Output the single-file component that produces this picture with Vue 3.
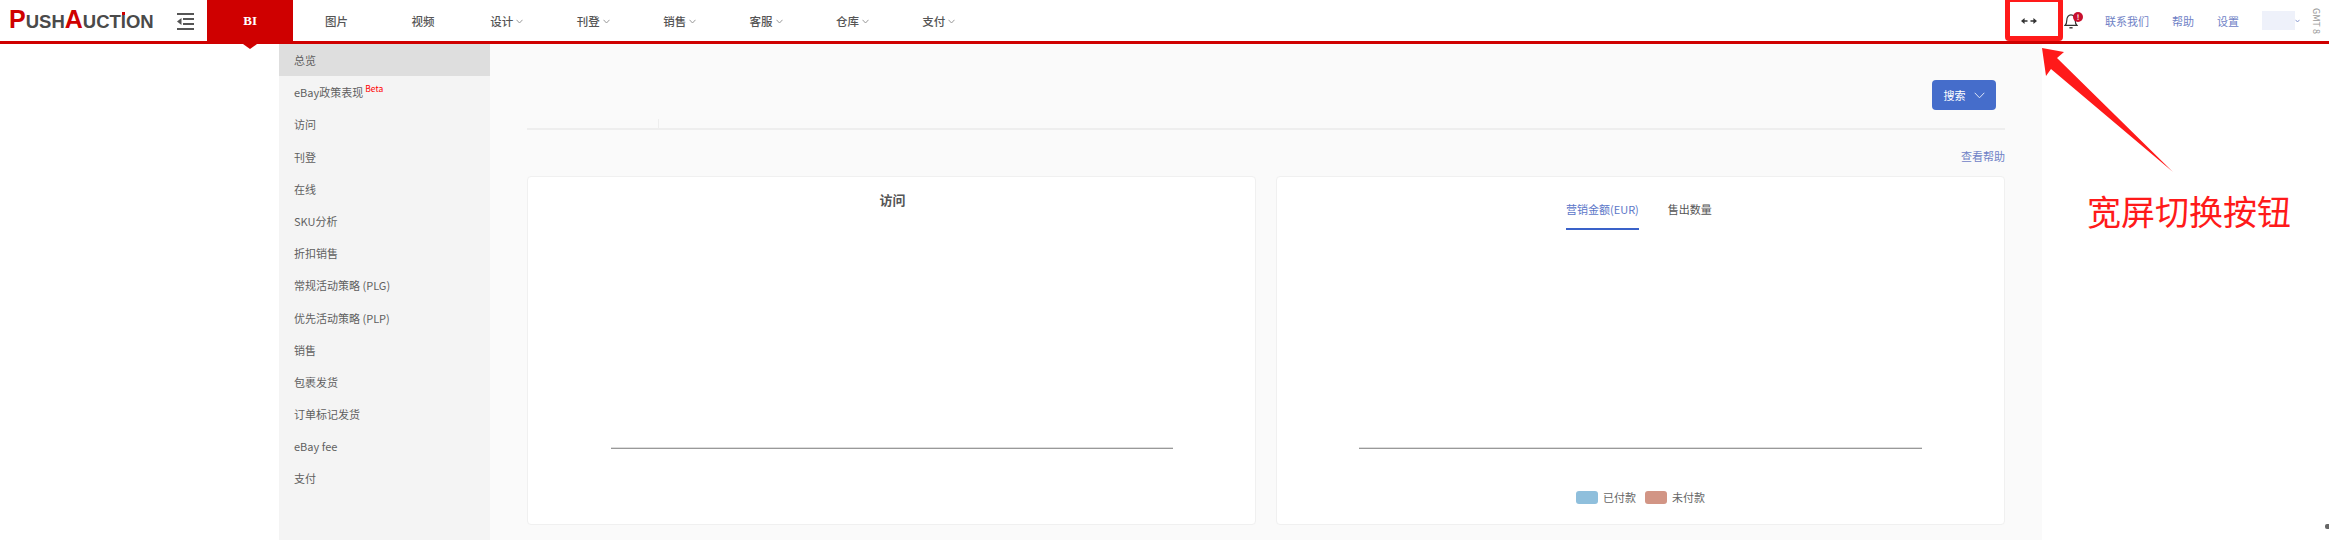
<template>
  <div class="page">
    <!-- 顶部导航 -->
    <header class="top-bar">
      <div class="logo">
        <span class="big">P</span><span>USH</span><span class="big">A</span><span>UCT</span><span class="dot-i">I</span><span>ON</span>
      </div>
      <svg class="menu-toggle" width="17" height="17" viewBox="0 0 17 17">
        <path d="M0 1h17M6 6h11M6 11h11M0 16h17" stroke="#555" stroke-width="2" fill="none" />
        <path d="M0 8.5L4.5 5v7z" fill="#555" />
      </svg>
      <nav class="nav">
        <a
          v-for="item in navItems"
          :key="item.label"
          :class="['nav-item', { 'nav-active': item.active }]"
        >
          <span>{{ item.label }}</span>
          <svg v-if="item.arrow" class="nav-chevron" width="7" height="5" viewBox="0 0 7 5">
            <path d="M0.5 0.8L3.5 4L6.5 0.8" stroke="#999" fill="none" />
          </svg>
        </a>
      </nav>
      <div class="top-right">
        <svg class="wide-icon" width="16" height="8" viewBox="0 0 16 8">
          <path d="M3 4h3.5M9.5 4h3.5" stroke="#333" stroke-width="1.4" />
          <path d="M0 4l3.6-3v6zM16 4l-3.6-3v6z" fill="#333" />
        </svg>
        <div class="bell">
          <svg width="14" height="16" viewBox="0 0 14 16">
            <path d="M1 12.4c1.4-1.3 1.8-3 1.8-5.2C2.8 4 4.6 1.8 7 1.8s4.2 2.2 4.2 5.4c0 2.2.4 3.9 1.8 5.2z" stroke="#333" stroke-width="1.2" fill="none" />
            <path d="M5.4 14.8h3.2" stroke="#333" stroke-width="1.4" />
          </svg>
          <span class="badge">!</span>
        </div>
        <a class="top-link">联系我们</a>
        <a class="top-link">帮助</a>
        <a class="top-link">设置</a>
        <div class="user-blur"></div>
        <svg class="user-chevron" width="5" height="4" viewBox="0 0 5 4">
          <path d="M0.5 0.8L2.5 3L4.5 0.8" stroke="#8a9ad0" fill="none" />
        </svg>
        <span class="gmt">GMT 8</span>
      </div>
    </header>
    <div class="active-caret"></div>

    <div class="body-row">
      <!-- 侧边菜单 -->
      <aside class="side-menu">
        <div
          v-for="(item, index) in sideItems"
          :key="item"
          :class="['side-item', { 'side-active': index === 0 }]"
        >
          {{ item }}<sup v-if="item === 'eBay政策表现'" class="beta">Beta</sup>
        </div>
      </aside>

      <!-- 主内容 -->
      <main class="content">
        <div class="filter-bar">
          <span class="filter-tick"></span>
          <button class="search-btn">
            搜索
            <svg width="11" height="7" viewBox="0 0 11 7">
              <path d="M0.7 0.8L5.5 5.8L10.3 0.8" stroke="#dfe6f7" fill="none" />
            </svg>
          </button>
        </div>
        <div class="help-row"><a class="help-link">查看帮助</a></div>
        <div class="cards">
          <section class="card">
            <h3 class="card-title">访问</h3>
            <div class="axis axis-left"></div>
          </section>
          <section class="card">
            <div class="tabs">
              <span class="tab tab-active">营销金额(EUR)</span>
              <span class="tab">售出数量</span>
            </div>
            <div class="axis axis-right"></div>
            <div class="legend">
              <i class="swatch swatch-paid"></i><span>已付款</span>
              <i class="swatch swatch-unpaid"></i><span>未付款</span>
            </div>
          </section>
        </div>
      </main>
    </div>

    <!-- 标注 -->
    <div class="mark-box"></div>
    <svg class="mark-arrow" width="150" height="140" viewBox="0 0 150 140">
      <path d="M5 3L27 7L20 13L136 127L14 24L9 31z" fill="#ff1a1a" />
    </svg>
    <div class="mark-text">宽屏切换按钮</div>
    <span class="corner-mark"></span>
  </div>
</template>

<script setup>
const navItems = [
  { label: 'BI', active: true },
  { label: '图片' },
  { label: '视频' },
  { label: '设计', arrow: true },
  { label: '刊登', arrow: true },
  { label: '销售', arrow: true },
  { label: '客服', arrow: true },
  { label: '仓库', arrow: true },
  { label: '支付', arrow: true }
]

const sideItems = [
  '总览',
  'eBay政策表现',
  '访问',
  '刊登',
  '在线',
  'SKU分析',
  '折扣销售',
  '常规活动策略 (PLG)',
  '优先活动策略 (PLP)',
  '销售',
  '包裹发货',
  '订单标记发货',
  'eBay fee',
  '支付'
]
</script>

<style>
html,
body {
  margin: 0;
  background: #fff;
}
</style>

<style scoped>
.page {
  position: relative;
  width: 2329px;
  height: 558px;
  overflow: hidden;
  background: #fff;
  font-family: "Noto Sans CJK SC", "Noto Sans", sans-serif;
  font-size: 11px;
  color: #666;
}

/* ===== 顶部导航 ===== */
.top-bar {
  display: flex;
  align-items: center;
  height: 41px;
  border-bottom: 3px solid #cf0000;
}

.logo {
  width: 176px;
  padding-left: 9px;
  box-sizing: border-box;
  font-family: "Liberation Sans", sans-serif;
  font-weight: 700;
  font-size: 18.5px;
  line-height: 41px;
  color: #4a4a4a;
  white-space: nowrap;
}

.logo .big {
  font-size: 25px;
  color: #cf0000;
}

.dot-i {
  position: relative;
}

.dot-i::before {
  content: "";
  position: absolute;
  left: 1px;
  top: 1px;
  width: 3px;
  height: 3px;
  background: #cf0000;
}

.menu-toggle {
  margin: 1px 13px 0 1px;
}

.nav {
  display: flex;
  height: 41px;
}

.nav-item {
  display: flex;
  align-items: center;
  justify-content: center;
  width: 86.4px;
  font-size: 11.5px;
  font-weight: 500;
  color: #555;
}

.nav-active {
  background: #cf0000;
  color: #fff;
  font-family: "Liberation Serif", serif;
  font-weight: 700;
  font-size: 13px;
}

.nav-chevron {
  margin: 1px 5px 0 3px;
}

.top-right {
  display: flex;
  align-items: center;
  margin-left: auto;
  height: 41px;
}

.wide-icon {
  margin-right: 27px;
}

.bell {
  position: relative;
  display: flex;
  margin-right: 27px;
}

.badge {
  position: absolute;
  right: -5px;
  top: -1px;
  width: 10px;
  height: 10px;
  border-radius: 50%;
  background: #c8102e;
  color: #fff;
  font-size: 7px;
  font-weight: 700;
  line-height: 10px;
  text-align: center;
}

.top-link {
  margin-right: 23px;
  color: #6f82c6;
}

.user-blur {
  width: 33px;
  height: 19px;
  background: #eef1fa;
}

.user-chevron {
  margin: 0 10px 0 0;
}

.gmt {
  writing-mode: vertical-rl;
  margin-right: 6px;
  font-size: 9px;
  color: #999;
}

.active-caret {
  position: absolute;
  left: 243px;
  top: 44px;
  border-left: 7.5px solid transparent;
  border-right: 7.5px solid transparent;
  border-top: 5px solid #cf0000;
}

/* ===== 主体 ===== */
.body-row {
  display: flex;
  margin-left: 279px;
  width: 1763px;
  height: 496px;
}

.side-menu {
  width: 211px;
  flex-shrink: 0;
  background: #f4f4f4;
}

.side-item {
  height: 32.2px;
  padding-left: 15px;
  line-height: 33px;
  color: #5f5f5f;
}

.side-active {
  background: #dedede;
}

.beta {
  margin-left: 2px;
  font-size: 8.5px;
  line-height: 1;
  color: #f00;
  vertical-align: 5px;
}

.content {
  flex: 1;
  padding: 0 37px;
  background: #fafafa;
}

.filter-bar {
  position: relative;
  display: flex;
  justify-content: flex-end;
  align-items: flex-start;
  height: 86px;
  padding: 36px 9px 0 0;
  box-sizing: border-box;
  border-bottom: 2px solid #eee;
}

.filter-tick {
  position: absolute;
  left: 131px;
  bottom: 0;
  width: 1px;
  height: 9px;
  background: #eee;
}

.search-btn {
  display: flex;
  align-items: center;
  justify-content: center;
  gap: 8px;
  width: 64px;
  height: 30px;
  padding: 0;
  border: none;
  border-radius: 4px;
  background: #456dcb;
  color: #fff;
  font: inherit;
}

.help-row {
  display: flex;
  justify-content: flex-end;
  align-items: center;
  height: 46px;
  padding-top: 6px;
  box-sizing: border-box;
}

.help-link {
  color: #6f82c6;
}

.cards {
  display: grid;
  grid-template-columns: 729px 729px;
  justify-content: space-between;
}

.card {
  position: relative;
  height: 349px;
  box-sizing: border-box;
  border: 1px solid #f0f0f0;
  border-radius: 4px;
  background: #fff;
}

.card-title {
  margin: 14px 0 0 2px;
  font-size: 13px;
  font-weight: 700;
  line-height: 18px;
  color: #555;
  text-align: center;
}

.tabs {
  display: flex;
  gap: 29px;
  margin: 22px 0 0 289px;
}

.tab {
  padding-bottom: 9px;
  line-height: 20px;
  color: #555;
}

.tab-active {
  border-bottom: 2px solid #3a62c9;
  color: #5b76c8;
}

.axis {
  position: absolute;
  top: 270px;
  height: 1px;
  border-top: 1px solid #ddd;
  background: #999;
}

.axis-left {
  left: 83px;
  width: 562px;
}

.axis-right {
  left: 82px;
  width: 563px;
}

.legend {
  position: absolute;
  left: 299px;
  top: 312px;
  display: flex;
  align-items: center;
  color: #666;
}

.swatch {
  width: 22px;
  height: 13px;
  margin-right: 5px;
  border-radius: 3px;
}

.swatch-paid {
  background: #8fbfdc;
}

.swatch-unpaid {
  margin-left: 9px;
  background: #d29585;
}

/* ===== 标注 ===== */
.mark-box {
  position: absolute;
  left: 2005px;
  top: -3px;
  width: 48px;
  height: 34px;
  border: 5px solid #ff1a1a;
  border-radius: 4px;
}

.mark-arrow {
  position: absolute;
  left: 2037px;
  top: 45px;
}

.mark-text {
  position: absolute;
  left: 2087px;
  top: 186px;
  font-family: "Noto Sans CJK SC", sans-serif;
  font-size: 34px;
  line-height: 50px;
  color: #ff1a1a;
}

.corner-mark {
  position: absolute;
  left: 2325px;
  top: 524px;
  width: 4px;
  height: 5px;
  background: #666;
  border-radius: 2px 0 0 2px;
}
</style>
